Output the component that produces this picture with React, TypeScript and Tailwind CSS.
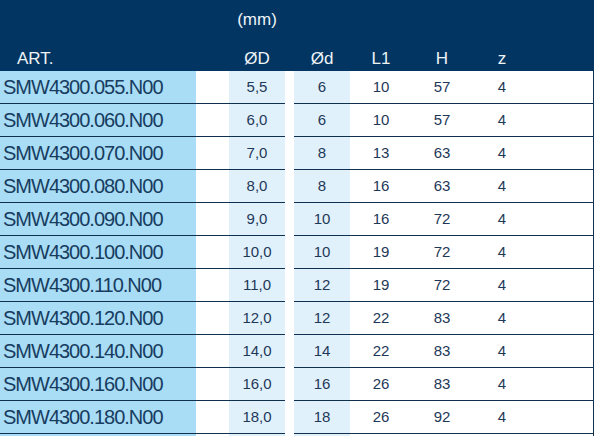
const rows = [
  ["SMW4300.055.N00", "5,5", "6", "10", "57", "4"],
  ["SMW4300.060.N00", "6,0", "6", "10", "57", "4"],
  ["SMW4300.070.N00", "7,0", "8", "13", "63", "4"],
  ["SMW4300.080.N00", "8,0", "8", "16", "63", "4"],
  ["SMW4300.090.N00", "9,0", "10", "16", "72", "4"],
  ["SMW4300.100.N00", "10,0", "10", "19", "72", "4"],
  ["SMW4300.110.N00", "11,0", "12", "19", "72", "4"],
  ["SMW4300.120.N00", "12,0", "12", "22", "83", "4"],
  ["SMW4300.140.N00", "14,0", "14", "22", "83", "4"],
  ["SMW4300.160.N00", "16,0", "16", "26", "83", "4"],
  ["SMW4300.180.N00", "18,0", "18", "26", "92", "4"],
];

function Row({ cells }: { cells: string[] }) {
  const line = "border-b border-[#10304f]";
  return (
    <div className="flex h-[33px]">
      <div className={`w-[196px] bg-[#a9dcf5] ${line} flex items-center pl-[3px] text-[20px] tracking-[-1px] text-[#173c60]`}>
        {cells[0]}
      </div>
      <div className={`w-[33px] bg-white ${line}`} />
      <div className={`w-[56px] bg-[#e1f1fb] ${line} flex items-center justify-center`}>{cells[1]}</div>
      <div className="w-[9px] bg-white" />
      <div className={`w-[56px] bg-[#e1f1fb] ${line} flex items-center justify-center`}>{cells[2]}</div>
      <div className={`w-[62px] ${line} flex items-center justify-center`}>{cells[3]}</div>
      <div className={`w-[60px] ${line} flex items-center justify-center`}>{cells[4]}</div>
      <div className={`w-[60px] ${line} flex items-center justify-center`}>{cells[5]}</div>
      <div className={`w-[62px] ${line} border-r`} />
    </div>
  );
}

export default function App() {
  return (
    <div className="w-[596px] h-[436px] overflow-hidden bg-white font-['Liberation_Sans',Arial,sans-serif] text-[15px] text-[#1e3858]">
      <div className="w-[594px] bg-[#023561] text-[17px] text-[#eef3f8]">
        <div className="flex h-[40px] items-center">
          <div className="w-[229px]" />
          <div className="w-[56px] text-center">(mm)</div>
        </div>
        <div className="flex h-[31px] items-start pt-[6px]">
          <div className="w-[196px] pl-[17px]">ART.</div>
          <div className="w-[33px]" />
          <div className="w-[56px] text-center">ØD</div>
          <div className="w-[9px]" />
          <div className="w-[56px] text-center">Ød</div>
          <div className="w-[62px] text-center">L1</div>
          <div className="w-[60px] text-center">H</div>
          <div className="w-[60px] text-center">z</div>
        </div>
      </div>
      {rows.map((r) => (
        <Row key={r[0]} cells={r} />
      ))}
      <Row cells={["", "", "", "", "", ""]} />
    </div>
  );
}
